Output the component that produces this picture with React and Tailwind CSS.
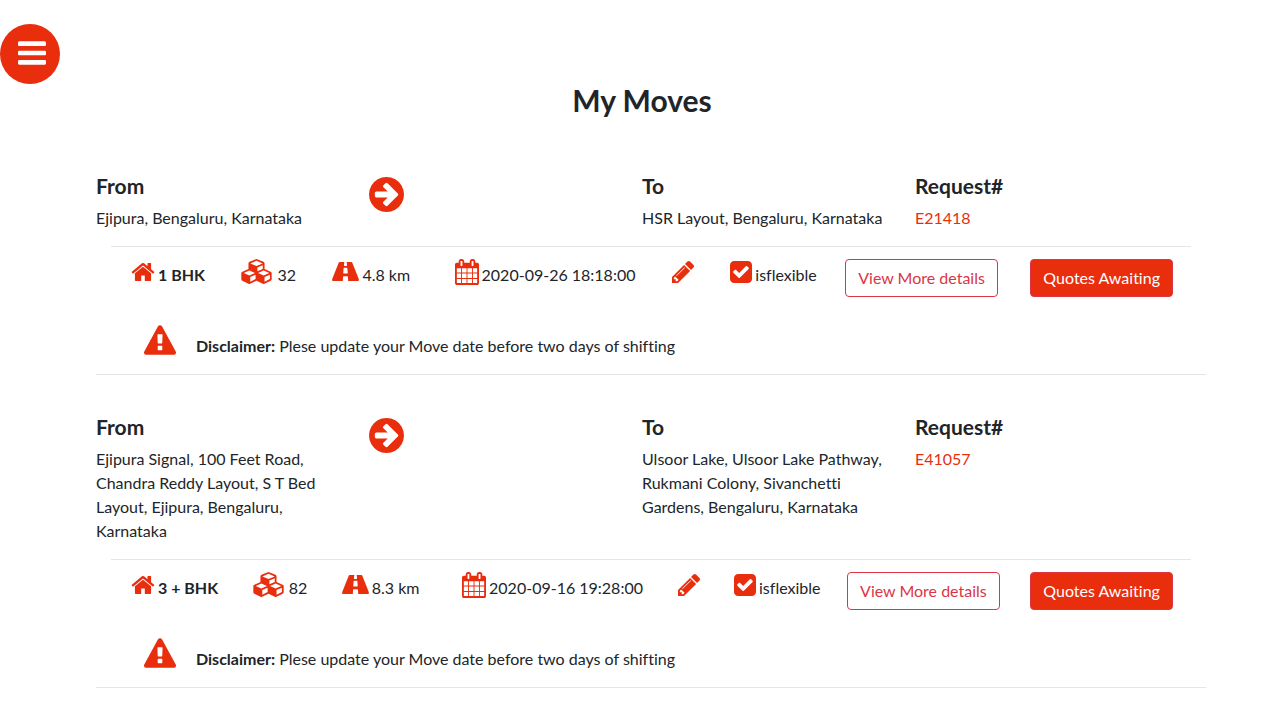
const moves = [
  { from: "Ejipura, Bengaluru, Karnataka", to: "HSR Layout, Bengaluru, Karnataka", id: "E21418", size: "1 BHK", items: "32", distance: "4.8 km", date: "2020-09-26 18:18:00" },
  { from: "Ejipura Signal, 100 Feet Road, Chandra Reddy Layout, S T Bed Layout, Ejipura, Bengaluru, Karnataka", to: "Ulsoor Lake, Ulsoor Lake Pathway, Rukmani Colony, Sivanchetti Gardens, Bengaluru, Karnataka", id: "E41057", size: "3 + BHK", items: "82", distance: "8.3 km", date: "2020-09-16 19:28:00" },
];

const icons = {
  bars: ["128 256 1536 1280", "M1664 1344v128q0 26-19 45t-45 19H192q-26 0-45-19t-19-45v-128q0-26 19-45t45-19h1408q26 0 45 19t19 45zm0-512v128q0 26-19 45t-45 19H192q-26 0-45-19t-19-45V832q0-26 19-45t45-19h1408q26 0 45 19t19 45zm0-512v128q0 26-19 45t-45 19H192q-26 0-45-19t-19-45V320q0-26 19-45t45-19h1408q26 0 45 19t19 45z"],
  home: ["0 253 1664 1283", "M1408 992v480q0 26-19 45t-45 19H960v-384H704v384H320q-26 0-45-19t-19-45V992q0-1 .5-3t.5-3l575-474 575 474q1 2 1 6zm223-69l-62 74q-8 9-21 11h-3q-13 0-21-7L832 424 140 1001q-12 8-24 7-13-2-21-11l-62-74q-8-10-7-23.500t11-21.500l719-599q32-26 76-26t76 26l244 204V288q0-14 9-23t23-9h192q14 0 23 9t9 23v408l219 182q10 8 11 21.500t-7 23.500z"],
  cubes: ["0 0 2176 1792", "M640 1632l384-192v-314l-384 164v342zm-64-454l404-173-404-173-404 173zm1088 454l384-192v-314l-384 164v342zm-64-454l404-173-404-173-404 173zm-448-293l384-165V454l-384 164v267zm-64-379l441-189-441-189-441 189zm1088 518v416q0 36-19 67t-52 47l-448 224q-25 14-57 14t-57-14l-448-224q-4-2-7-4-2 2-7 4l-448 224q-25 14-57 14t-57-14L71 1554q-33-16-52-47t-19-67v-416q0-38 21.500-70t56.500-48l434-186V320q0-38 21.500-70t56.500-48L1038 10q23-10 50-10t50 10l448 192q35 16 56.500 48t21.500 70v400l434 186q36 16 57 48t21 70z"],
  road: ["60 256 1800 1280", "M1111 1000v-4l-24-320q-1-13-11-22.500t-23-9.500H867q-13 0-23 9.500T833 676l-24 320v4q-1 12 8 20t21 8h244q12 0 21-8t8-20zm749 467q0 69-44 69h-704q13 0 22-9.500t8-22.500l-20-256q-1-13-11-22.500t-23-9.500H832q-13 0-23 9.500t-11 22.500l-20 256q-1 13 8 22.500t22 9.500H104q-44 0-44-69 0-52 25-113L502 310q8-19 26-33t38-14h339q-13 0-23 9.500T871 295l-15 192q-1 14 8 23t22 9h148q13 0 22-9t8-23l-15-192q-1-13-11-22.500t-23-9.500h339q20 0 38 14t26 33l417 1044q25 61 25 113z"],
  calendar: ["64 0 1664 1792", "M192 1664h288v-288h-288v288zm352 0h320v-288h-320v288zm-352-352h288v-320h-288v320zm352 0h320v-320h-320v320zm-352-384h288v-288h-288v288zm736 736h320v-288h-320v288zm-384-736h320v-288h-320v288zm768 736h288v-288h-288v288zm-384-352h320v-320h-320v320zm-352-864v-288q0-13-9.500-22.500t-22.500-9.500h-64q-13 0-22.500 9.500t-9.500 22.500v288q0 13 9.500 22.500t22.500 9.500h64q13 0 22.500-9.500t9.500-22.500zm736 864h288v-320h-288v320zm-384-384h320v-288h-320v288zm384 0h288v-288h-288v288zm32-480v-288q0-13-9.500-22.500t-22.500-9.500h-64q-13 0-22.500 9.500t-9.500 22.500v288q0 13 9.500 22.500t22.500 9.500h64q13 0 22.500-9.500t9.500-22.500zm384-64v1280q0 52-38 90t-90 38h-1408q-52 0-90-38t-38-90v-1280q0-52 38-90t90-38h128v-96q0-66 47-113t113-47h64q66 0 113 47t47 113v96h384v-96q0-66 47-113t113-47h64q66 0 113 47t47 113v96h128q52 0 90 38t38 90z"],
  pencil: ["128 149 1515 1515", "M491 1536l91-91-235-235-91 91v107h128v128h107zm523-928q0-22-22-22-10 0-17 7l-542 542q-7 7-7 17 0 22 22 22 10 0 17-7l542-542q7-7 7-17zm-54-192l416 416-832 832h-416v-416zm683 96q0 53-37 90l-166 166-416-416 166-165q36-38 90-38 53 0 91 38l235 234q37 39 37 91z"],
  check: ["128 128 1536 1536", "M813 1299l614-614q19-19 19-45t-19-45l-102-102q-19-19-45-19t-45 19l-467 467-211-211q-19-19-45-19t-45 19l-102 102q-19 19-19 45t19 45l358 358q19 19 45 19t45-19zm851-883v960q0 119-84.500 203.500t-203.500 84.500h-960q-119 0-203.500-84.500t-84.500-203.500v-960q0-119 84.500-203.500t203.500-84.500h960q119 0 203.500 84.500t84.500 203.500z"],
  arrow: ["128 128 1536 1536", "M1413 896q0-27-18-45l-91-91-362-362q-18-18-45-18t-45 18l-91 91q-18 18-18 45t18 45l189 189h-502q-26 0-45 19t-19 45v128q0 26 19 45t45 19h502l-189 189q-19 19-19 45t19 45l91 91q18 18 45 18t45-18l362-362 91-91q18-18 18-45zm251 0q0 209-103 385.500t-279.500 279.500-385.500 103-385.500-103-279.500-279.500-103-385.500 103-385.500 279.500-279.500 385.500-103 385.500 103 279.500 279.500 103 385.500z"],
  warning: ["0 0 1792 1664", "M1024 1375v-190q0-14-9.500-23.500t-22.500-9.500h-192q-13 0-22.500 9.500t-9.500 23.500v190q0 14 9.500 23.500t22.500 9.500h192q13 0 22.500-9.500t9.500-23.500zm-2-374l18-459q0-12-10-19-13-11-24-11h-220q-11 0-24 11-10 7-10 21l17 457q0 10 10 16.500t24 6.500h185q14 0 23.500-6.500t10.500-16.500zm-14-934l768 1408q35 63-2 126-17 29-46.500 46t-63.500 17h-1536q-34 0-63.500-17t-46.500-46q-37-63-2-126l768-1408q17-31 47-49t65-18 65 18 47 49z"],
};

function Icon({ name, className }) {
  const [viewBox, d] = icons[name];
  return (
    <svg aria-hidden="true" viewBox={viewBox} className={className} fill="currentColor">
      <path d={d} />
    </svg>
  );
}

function Heading({ children }) {
  return <h2 className="mb-2 text-[21px] leading-6 font-bold">{children}</h2>;
}

function Fact({ icon, iconClass, className, children }) {
  return (
    <span className={`flex gap-[3px] ${className}`}>
      <span className="flex h-[25px] items-center text-[#e92e0e]"><Icon name={icon} className={iconClass} /></span>
      <span className="pt-1">{children}</span>
    </span>
  );
}

function Move({ move }) {
  return (
    <article>
      <div className="grid grid-cols-4 items-start pr-[18px]">
        <section className="pr-[30px]">
          <Heading>From</Heading>
          <p>{move.from}</p>
        </section>
        <Icon name="arrow" className="mt-[3px] size-[35px] text-[#e92e0e]" />
        <section className="pr-[30px]">
          <Heading>To</Heading>
          <p>{move.to}</p>
        </section>
        <section>
          <Heading>Request#</Heading>
          <a href="#details" className="text-[#e92e0e]">{move.id}</a>
        </section>
      </div>
      <div className="mx-[15px] mt-4 flex items-start justify-between border-t border-black/10 pt-3 pr-[18px] pl-5 whitespace-nowrap">
        <Fact icon="home" iconClass="h-[18px] w-6" className="pr-2"><b>{move.size}</b></Fact>
        <Fact icon="cubes" iconClass="mr-0.5 h-[25px] w-[31px]" className="pr-2">{move.items}</Fact>
        <Fact icon="road" iconClass="h-[19px] w-[27px]" className="pr-4">{move.distance}</Fact>
        <Fact icon="calendar" iconClass="h-[26px] w-6" className="pr-2">{move.date}</Fact>
        <button type="button" aria-label="Edit move date" className="flex h-[25px] items-center pr-2 text-[#e92e0e]">
          <Icon name="pencil" className="size-[22px]" />
        </button>
        <Fact icon="check" iconClass="size-[22px]" className="">isflexible</Fact>
        <button type="button" className="mr-1 h-[38px] rounded border border-[#dc3545] px-3 text-[#dc3545]">View More details</button>
        <button type="button" className="h-[38px] rounded border border-[#dc3545] bg-[#e92e0e] px-3 text-white">Quotes Awaiting</button>
      </div>
      <p className="mt-7 flex pl-12">
        <Icon name="warning" className="mr-5 h-[30px] w-8 text-[#e92e0e]" />
        <span className="pt-[9px]"><b>Disclaimer:</b> Plese update your Move date before two days of shifting</span>
      </p>
      <hr className="mt-4 border-black/10" />
    </article>
  );
}

export default function App() {
  return (
    <div className="bg-white pt-6 pb-4 font-['Lato',sans-serif] text-base leading-6 text-[#212529] [font-variant-ligatures:no-common-ligatures]">
      <button type="button" aria-label="Menu" className="flex size-[60px] items-center justify-center rounded-full bg-[#e92e0e] pb-0.5 pl-1 text-white">
        <Icon name="bars" className="h-[26px] w-7" />
      </button>
      <main className="pr-[78px] pl-24">
        <h1 className="pr-[18px] text-center text-3xl leading-8 font-bold">My Moves</h1>
        <div className="mt-[58px] flex flex-col gap-10">
          {moves.map((m) => <Move key={m.id} move={m} />)}
        </div>
      </main>
    </div>
  );
}
